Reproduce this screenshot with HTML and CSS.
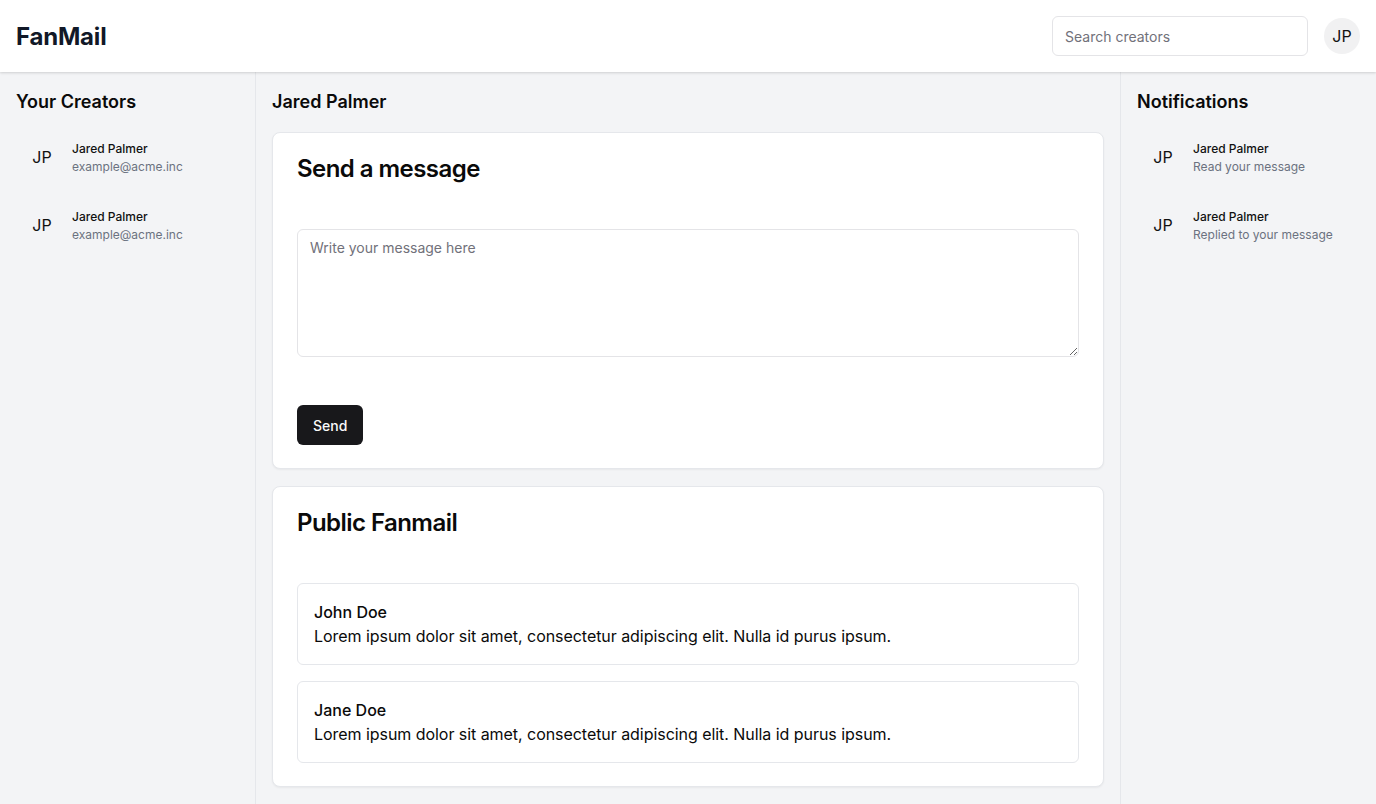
FILE: index.html
```html
<!DOCTYPE html>
<html lang="en">
<head>
<meta charset="utf-8">
<title>FanMail</title>
<link rel="stylesheet" href="styles.css">
</head>
<body>
<header class="topbar">
  <div class="brand">FanMail</div>
  <div class="topbar-right">
    <input class="search" type="text" placeholder="Search creators">
    <div class="avatar avatar-top">JP</div>
  </div>
</header>
<div class="layout">
  <aside class="sidebar sidebar-left">
    <h2 class="side-title">Your Creators</h2>
    <ul class="person-list">
      <li class="person">
        <div class="avatar">JP</div>
        <div class="person-text">
          <div class="person-name">Jared Palmer</div>
          <div class="person-sub">example@acme.inc</div>
        </div>
      </li>
      <li class="person">
        <div class="avatar">JP</div>
        <div class="person-text">
          <div class="person-name">Jared Palmer</div>
          <div class="person-sub">example@acme.inc</div>
        </div>
      </li>
    </ul>
  </aside>
  <main class="main">
    <h2 class="side-title">Jared Palmer</h2>
    <section class="card">
      <h3 class="card-title">Send a message</h3>
      <textarea class="message" placeholder="Write your message here"></textarea>
      <div class="card-footer">
        <button class="btn">Send</button>
      </div>
    </section>
    <section class="card">
      <h3 class="card-title">Public Fanmail</h3>
      <div class="fanmail-list">
        <div class="fanmail">
          <div class="fanmail-name">John Doe</div>
          <div class="fanmail-body">Lorem ipsum dolor sit amet, consectetur adipiscing elit. Nulla id purus ipsum.</div>
        </div>
        <div class="fanmail">
          <div class="fanmail-name">Jane Doe</div>
          <div class="fanmail-body">Lorem ipsum dolor sit amet, consectetur adipiscing elit. Nulla id purus ipsum.</div>
        </div>
      </div>
    </section>
  </main>
  <aside class="sidebar sidebar-right">
    <h2 class="side-title">Notifications</h2>
    <ul class="person-list">
      <li class="person">
        <div class="avatar">JP</div>
        <div class="person-text">
          <div class="person-name">Jared Palmer</div>
          <div class="person-sub">Read your message</div>
        </div>
      </li>
      <li class="person">
        <div class="avatar">JP</div>
        <div class="person-text">
          <div class="person-name">Jared Palmer</div>
          <div class="person-sub">Replied to your message</div>
        </div>
      </li>
    </ul>
  </aside>
</div>
</body>
</html>
```
FILE: styles.css
```css
* { box-sizing: border-box; }
html, body { margin: 0; padding: 0; }
body {
  font-family: Inter, "Noto Sans", sans-serif;
  background: #f3f4f6;
  color: #0a0a0a;
  height: 804px;
  overflow: hidden;
}
.topbar {
  height: 72px;
  background: #ffffff;
  display: flex;
  align-items: center;
  justify-content: space-between;
  padding: 0 16px;
  box-shadow: 0 1px 3px rgba(0,0,0,0.10), 0 1px 2px rgba(0,0,0,0.06);
  position: relative;
  z-index: 2;
}
.brand {
  font-size: 24px;
  font-weight: 700;
  color: #111827;
  letter-spacing: -0.2px;
}
.topbar-right {
  display: flex;
  align-items: center;
  gap: 16px;
}
.search {
  width: 256px;
  height: 40px;
  border: 1px solid #e4e4e7;
  border-radius: 6px;
  padding: 0 12px;
  font-family: inherit;
  font-size: 14px;
  color: #111;
  background: #fff;
  outline: none;
}
.search::placeholder { color: #71717a; }
.avatar {
  width: 40px;
  height: 40px;
  flex: 0 0 40px;
  display: flex;
  align-items: center;
  justify-content: center;
  font-size: 16px;
  color: #111;
}
.avatar-top {
  width: 36px;
  height: 36px;
  flex-basis: 36px;
  border-radius: 50%;
  background: #f1f1f2;
}
.layout {
  display: flex;
  height: 732px;
}
.sidebar {
  width: 256px;
  flex: 0 0 256px;
  padding: 16px;
}
.sidebar-left { border-right: 1px solid #e5e7eb; }
.sidebar-right { border-left: 1px solid #e5e7eb; }
.side-title {
  margin: 0;
  font-size: 18px;
  line-height: 28px;
  font-weight: 600;
  color: #0a0a0a;
}
.person-list {
  list-style: none;
  margin: 13px 0 0;
  padding: 0;
  display: flex;
  flex-direction: column;
  gap: 12px;
}
.person {
  display: flex;
  align-items: center;
  gap: 10px;
  padding: 8px 6px;
}
.person-text { padding-top: 1px; }
.person-name {
  font-size: 12px;
  line-height: 18px;
  font-weight: 500;
  color: #111;
}
.person-sub {
  font-size: 12px;
  line-height: 18px;
  color: #6b7280;
}
.main {
  flex: 1;
  padding: 16px;
  display: flex;
  flex-direction: column;
  gap: 17px;
}
.main > .side-title { margin-bottom: -1px; }
.card {
  background: #fff;
  border: 1px solid #e5e7eb;
  border-radius: 8px;
  box-shadow: 0 1px 2px rgba(0,0,0,0.05);
  padding: 24px 24px 23px;
  display: flex;
  flex-direction: column;
}
.card-title {
  margin: 0 0 48px;
  font-size: 24px;
  line-height: 24px;
  font-weight: 600;
  letter-spacing: -0.55px;
  color: #0a0a0a;
}
.message {
  display: block;
  width: 100%;
  height: 128px;
  border: 1px solid #e4e4e7;
  border-radius: 6px;
  padding: 8px 12px;
  font-family: inherit;
  font-size: 14px;
  line-height: 20px;
  resize: vertical;
  outline: none;
}
.message::placeholder { color: #71717a; }
.card-footer {
  margin-top: 48px;
  display: flex;
}
.btn {
  height: 40px;
  padding: 0 16px;
  background: #18181b;
  color: #fafafa;
  border: none;
  border-radius: 6px;
  font-family: inherit;
  font-size: 14px;
  font-weight: 500;
}
.fanmail-list {
  display: flex;
  flex-direction: column;
  gap: 16px;
}
.fanmail {
  border: 1px solid #e5e7eb;
  border-radius: 6px;
  padding: 16px;
  font-size: 16px;
  line-height: 24px;
  color: #0a0a0a;
}
.fanmail-name { font-weight: 500; }
.fanmail-body { letter-spacing: -0.05px; }
```
